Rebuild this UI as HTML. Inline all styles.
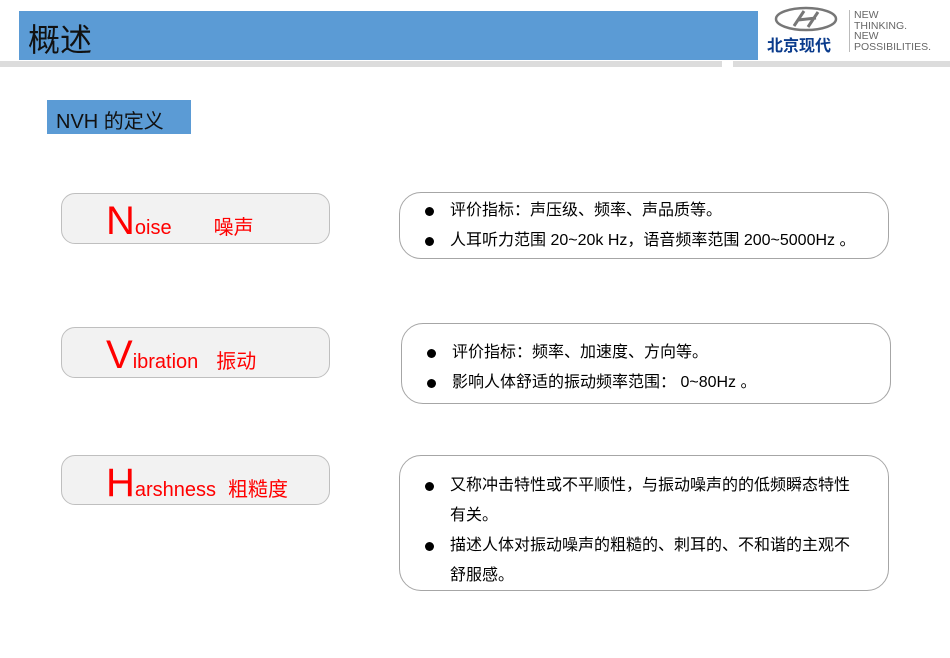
<!DOCTYPE html>
<html><head><meta charset="utf-8"><style>
body{margin:0;width:950px;height:658px;background:#fff;position:relative;overflow:hidden;font-family:"Liberation Sans","Noto Sans CJK SC",sans-serif}
.a{position:absolute}
.hdr{left:19px;top:11px;width:739px;height:49px;background:#5b9bd5}
.lb{background:#f2f2f2;border:1px solid #bfbfbf;border-radius:14px;color:#f00;font-size:20px;box-sizing:border-box}
.lb .row{position:absolute;left:44px;top:5px;height:46px;display:flex;align-items:baseline;white-space:nowrap}
.lb span.big{font-size:40px}
.rb{border:1px solid #a6a6a6;border-radius:22px;box-sizing:border-box;font-size:16px;color:#000;line-height:30px}
.rb div{position:relative;padding-left:50px}
.rb div:before{content:"";position:absolute;left:25px;top:11px;width:9px;height:9px;border-radius:50%;background:#000}
</style></head><body>
<div class="a hdr"></div>
<div class="a" style="left:28px;top:15px;font-size:32px;color:#111">概述</div>
<div class="a" style="left:0;top:61px;width:722px;height:6px;background:#dcdcdc"></div>
<div class="a" style="left:733px;top:61px;width:217px;height:6px;background:#dcdcdc"></div>
<svg class="a" style="left:774px;top:6px" width="64" height="26" viewBox="0 0 64 26"><ellipse cx="32" cy="13" rx="30" ry="11" fill="none" stroke="#777" stroke-width="2.5"/><path d="M20 20 L30 5 M44 6 L34 21 M24 14 L42 12" stroke="#777" stroke-width="3" fill="none"/></svg>
<div class="a" style="left:767px;top:32px;font-size:16px;font-weight:bold;color:#0a3b8c">北京现代</div>
<div class="a" style="left:849px;top:10px;width:1px;height:42px;background:#bbb"></div>
<div class="a" style="left:854px;top:10px;font-size:10.5px;line-height:10.5px;color:#666">NEW<br>THINKING.<br>NEW<br>POSSIBILITIES.</div>
<div class="a" style="left:47px;top:100px;width:144px;height:34px;background:#5b9bd5"></div>
<div class="a" style="left:56px;top:105px;font-size:20px;color:#111">NVH 的定义</div>

<div class="a lb" style="left:61px;top:193px;width:269px;height:51px"><div class="row"><span class="big">N</span>oise<span style="margin-left:42px">噪声</span></div></div>
<div class="a lb" style="left:61px;top:327px;width:269px;height:51px"><div class="row"><span class="big">V</span>ibration<span style="margin-left:18px">振动</span></div></div>
<div class="a lb" style="left:61px;top:455px;width:269px;height:50px"><div class="row"><span class="big">H</span>arshness<span style="margin-left:12px">粗糙度</span></div></div>

<div class="a rb" style="left:399px;top:192px;width:490px;height:67px;padding-top:3px"><div>评价指标：声压级、频率、声品质等。</div><div>人耳听力范围 20~20k Hz，语音频率范围 200~5000Hz 。</div></div>
<div class="a rb" style="left:401px;top:323px;width:490px;height:81px;padding-top:14px"><div>评价指标：频率、加速度、方向等。</div><div>影响人体舒适的振动频率范围： 0~80Hz 。</div></div>
<div class="a rb" style="left:399px;top:455px;width:490px;height:136px;padding-top:15px"><div style="padding-right:32px">又称冲击特性或不平顺性，与振动噪声的的低频瞬态特性有关。</div><div style="padding-right:32px">描述人体对振动噪声的粗糙的、刺耳的、不和谐的主观不舒服感。</div></div>
</body></html>
